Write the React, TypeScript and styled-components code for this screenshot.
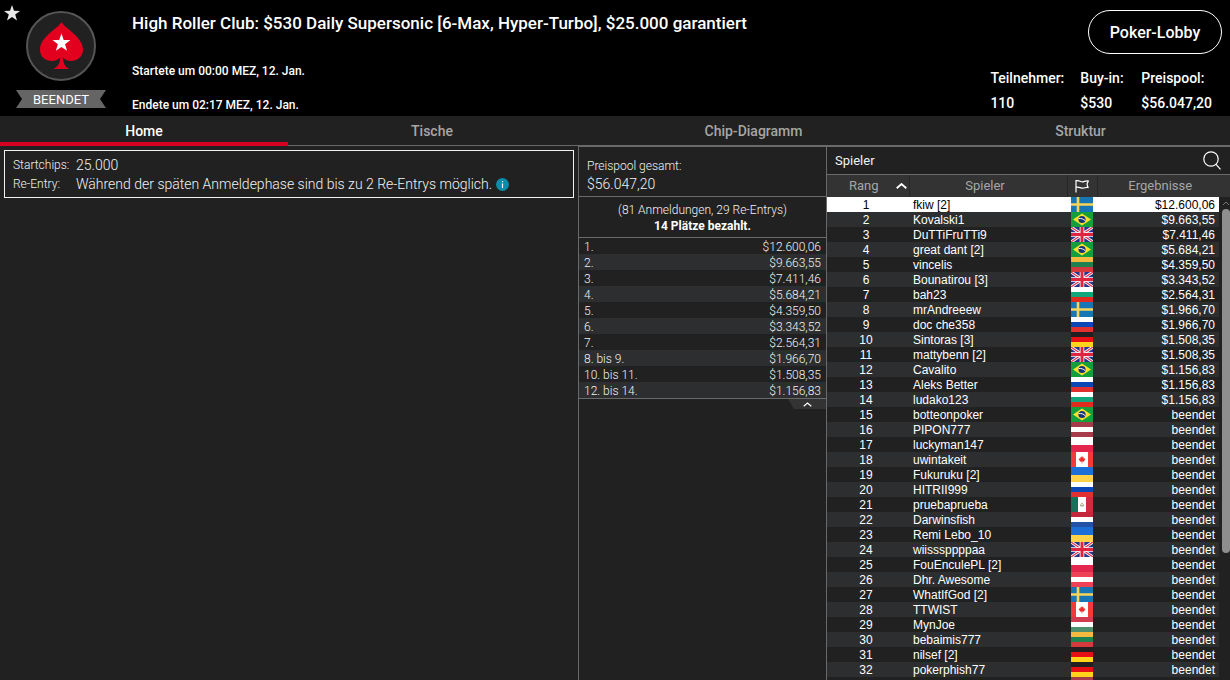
import React from "react";
import styled, { createGlobalStyle, css } from "styled-components";

const c = {
  bg: "#212121",
  stripe: "#2c2e2f",
  head: "#333333",
  line: "#6a6a6a",
  red: "#d70022",
  text: "#f2f2f2",
  muted: "#a6a6a6",
};

const GlobalStyle = createGlobalStyle`
  * { box-sizing: border-box; }
  body {
    margin: 0;
    background: ${c.bg};
    color: ${c.text};
    font-family: Roboto, "Liberation Sans", sans-serif;
  }
  button { font: inherit; color: inherit; background: none; border: 0; padding: 0; cursor: pointer; }
`;

const Window = styled.div`
  display: flex;
  flex-direction: column;
  height: 100vh;
  overflow: hidden;
`;

const Header = styled.header`
  display: flex;
  flex: none;
  background: #000;
  color: #fff;
  padding: 0 8px 0 4px;
  height: 116px;
`;

const FavoriteButton = styled.button`
  align-self: flex-start;
  display: block;
  width: 16px;
  height: 16px;
  margin-top: 5px;
  svg { display: block; }
`;

const Badge = styled.div`
  display: flex;
  flex-direction: column;
  align-items: center;
  width: 90px;
  margin-left: -4px;
  padding-top: 11px;
`;

const Emblem = styled.svg`
  display: block;
  width: 70px;
  height: 70px;
`;

const Ribbon = styled.div`
  width: 90px;
  margin-top: 9px;
  background: #656565;
  clip-path: polygon(0 0, 100% 0, calc(100% - 6px) 50%, 100% 100%, 0 100%, 6px 50%);
  font-size: 13px;
  line-height: 19px;
  height: 18px;
  text-align: center;
`;

const Summary = styled.div`
  flex: 1;
  margin-left: 26px;
  padding-top: 12px;
`;

const Title = styled.h1`
  margin: 0;
  font-size: 17px;
  font-weight: 500;
  line-height: 22px;
`;

const TimeLine = styled.p`
  margin: 0;
  font-size: 12px;
  font-weight: 500;
  line-height: 34px;
  &:first-of-type { margin-top: 20px; }
`;

const Side = styled.div`
  display: flex;
  flex-direction: column;
  align-items: flex-end;
  padding-top: 10px;
`;

const LobbyButton = styled.button`
  height: 44px;
  width: 134px;
  border: 1px solid #fff;
  border-radius: 22px;
  font-size: 16px;
  font-weight: 500;
`;

const Facts = styled.dl`
  display: flex;
  gap: 16px;
  margin: 12px 10px 0 0;
  font-size: 14px;
  font-weight: 500;
  line-height: 25px;
  div { min-width: 45px; }
  dd { margin: 0; }
`;

const Tabs = styled.nav`
  display: grid;
  flex: none;
  grid-template-columns: 288fr 288fr 355fr 299fr;
  height: 30px;
  border-bottom: 1px solid ${c.line};
`;

const Tab = styled.button<{ $active?: boolean }>`
  height: 30px;
  padding-top: 4px;
  font-size: 14px;
  font-weight: 500;
  line-height: 22px;
  color: ${(p) => (p.$active ? "#fff" : c.muted)};
  border-bottom: 4px solid ${(p) => (p.$active ? c.red : "transparent")};
`;

const Main = styled.main`
  flex: 1;
  min-height: 0;
  display: grid;
  grid-template-columns: 578fr 249fr 403fr;
`;

const InfoPanel = styled.section`
  padding: 4px;
`;

const InfoBox = styled.dl`
  display: grid;
  grid-template-columns: 63px 1fr;
  margin: 0;
  padding: 5px 8px 3px;
  border: 1px solid #f2f2f2;
  font-weight: 300;
  line-height: 19px;
  dt { font-size: 12px; }
  dd { margin: 0; font-size: 14px; }
`;

const InfoIcon = styled.svg`
  width: 13px;
  height: 13px;
  margin-left: 4px;
  vertical-align: -2px;
`;

const PrizePanel = styled.section`
  border: solid ${c.line};
  border-width: 1px 1px 0;
  font-weight: 300;
`;

const PrizeTotal = styled.div`
  padding: 10px 8px 3px;
  border-bottom: 1px solid ${c.line};
  line-height: 18px;
  font-size: 12px;
  strong { display: block; font-size: 14px; font-weight: 300; }
`;

const PrizeEntries = styled.div`
  padding: 5px 0 3px;
  border-bottom: 1px solid ${c.line};
  font-size: 12px;
  line-height: 16px;
  text-align: center;
  strong { display: block; font-weight: 700; color: #fff; }
`;

const PrizeTable = styled.table`
  width: 100%;
  border-collapse: collapse;
  border-bottom: 1px solid ${c.line};
  font-size: 12px;
  line-height: 14px;
  td { padding: 2px 5px 0; }
  td:last-child { text-align: right; }
  tr:nth-child(even) { background: ${c.stripe}; }
`;

const Collapse = styled.button`
  display: flex;
  justify-content: center;
  align-items: center;
  width: 38px;
  height: 10px;
  margin-left: auto;
  background: ${c.head};
  clip-path: polygon(0 0, 100% 0, 100% 100%, 6px 100%);
`;

const PlayerPanel = styled.section`
  min-width: 0;
  overflow: hidden;
  border-top: 1px solid ${c.line};
`;

const PlayerBar = styled.div`
  display: flex;
  align-items: center;
  justify-content: space-between;
  height: 28px;
  padding: 0 9px 0 8px;
  border-bottom: 1px solid ${c.line};
  h2 { margin: 0; font-size: 13px; font-weight: 400; }
  svg { display: block; }
`;

const TableArea = styled.div`
  position: relative;
`;

const PlayerTable = styled.table`
  width: 100%;
  table-layout: fixed;
  border-collapse: collapse;
  font: 12px/13px "Liberation Sans", Arial, sans-serif;
  color: #fff;
`;

const HeadCell = styled.th`
  height: 22px;
  padding: 0;
  background: ${c.head};
  border-right: 1px solid #272727;
  font: 400 13px/22px Roboto, "Liberation Sans", sans-serif;
  color: ${c.muted};
  &:nth-child(2) { padding-right: 6px; }
  &:nth-child(4) { padding-left: 4px; }
  &:nth-last-child(-n + 2) { border-right: 0; }
  svg { display: block; margin: 0 auto; }
`;

const SortHead = styled.span`
  display: flex;
  align-items: center;
  justify-content: space-between;
  padding: 0 2px 0 22px;
  && svg { margin: 0; }
`;

const selectedRow = css`
  td { background: #fff; color: #000; }
  td:last-child { background: ${c.bg}; }
`;

const PlayerRow = styled.tr<{ $selected: boolean }>`
  height: 15px;
  &:nth-child(even) td:not(:last-child) { background: ${c.stripe}; }
  td { padding: 2px 0 0; white-space: nowrap; }
  td:nth-child(1) { text-align: center; padding-right: 4px; }
  td:nth-child(2) { padding-left: 4px; }
  td:nth-child(3) { padding: 0 0 0 4px; }
  td:nth-child(4) { text-align: right; padding-right: 4px; }
  ${(p) => p.$selected && selectedRow}
`;

const FlagImage = styled.svg`
  display: block;
  width: 22px;
  height: 15px;
`;

const ScrollTrack = styled.div`
  position: absolute;
  top: 22px;
  right: 0;
  width: 8px;
  height: 356px;
  display: flex;
  flex-direction: column;
  align-items: center;
`;

const ScrollThumb = styled.div`
  width: 8px;
  flex: 1;
  background: #8e8e8e;
  border-radius: 4px;
`;

const Chevron = ({ width, height, color = "#fff", stroke = 1.5 }: { width: number; height: number; color?: string; stroke?: number }) => (
  <svg width={width} height={height} viewBox={`0 0 ${width} ${height}`} fill="none" stroke={color} strokeWidth={stroke}>
    <path d={`M0.7 ${height - 0.8}L${width / 2} 1L${width - 0.7} ${height - 0.8}`} />
  </svg>
);

const stripes: Record<string, [string, string, string]> = {
  lt: ["#f5b940", "#1f8050", "#d23a3c"],
  bg: ["#ffffff", "#11a67c", "#e02b1f"],
  ru: ["#ffffff", "#0b47b5", "#e23030"],
  de: ["#231f20", "#e60f14", "#ffd21c"],
  lv: ["#a63b49", "#ffffff", "#a63b49"],
  nl: ["#c4283b", "#ffffff", "#2152a5"],
  at: ["#ee4257", "#ffffff", "#ee4257"],
  hu: ["#d33c50", "#ffffff", "#4f8f6c"],
};

const leaf = "M11 4l.9 1.600.9-.400-.2 1.600 1.400-.6-.2 1 .7.5-1.700 1.300.1.700-1.600-.1V11.500h-.6V9.600l-1.600.1.100-.7L7.500 7.700l.7-.5-.2-1 1.400.6-.2-1.600.9.400z";

function Flag({ code }: { code: string }) {
  let art: React.ReactNode;
  if (stripes[code]) {
    art = stripes[code].map((fill, i) => <rect key={i} y={i * 5} width="22" height="5" fill={fill} />);
  } else if (code === "pl") {
    art = (<><rect width="22" height="8" fill="#fff" /><rect y="8" width="22" height="7" fill="#e2264d" /></>);
  } else if (code === "ua") {
    art = (<><rect width="22" height="8" fill="#1b6fd6" /><rect y="8" width="22" height="7" fill="#ffd24a" /></>);
  } else if (code === "se") {
    art = (<><rect width="22" height="15" fill="#1976b4" /><path d="M0 7.500h22M7 0v15" stroke="#f8d55a" strokeWidth="2.600" /></>);
  } else if (code === "br") {
    art = (
      <>
        <rect width="22" height="15" fill="#13a03c" />
        <path d="M2 7.500L11 1.500l9 6-9 6z" fill="#fbe12c" />
        <circle cx="11" cy="7.500" r="3.600" fill="#17347c" />
        <path d="M7.600 6.600c2.500-.4 5 .3 6.700 2.200" stroke="#fff" strokeWidth="1" fill="none" />
      </>
    );
  } else if (code === "gb") {
    art = (
      <>
        <rect width="22" height="15" fill="#27348b" />
        <path d="M0 0l22 15M22 0L0 15" stroke="#fff" strokeWidth="3" />
        <path d="M0 0l22 15M22 0L0 15" stroke="#e0344e" strokeWidth="1.200" />
        <path d="M11 0v15M0 7.500h22" stroke="#fff" strokeWidth="4.600" />
        <path d="M11 0v15M0 7.500h22" stroke="#df2440" strokeWidth="3" />
      </>
    );
  } else if (code === "ca") {
    art = (<><rect width="22" height="15" fill="#f23a3c" /><rect x="5" width="12" height="15" fill="#fff" /><path d={leaf} fill="#ee2a2a" /></>);
  } else {
    art = (
      <>
        <rect width="22" height="15" fill="#fff" />
        <rect width="7" height="15" fill="#17705a" />
        <rect x="15" width="7" height="15" fill="#d32a40" />
        <path d="M8.700 8.500c1 1.500 3.600 1.500 4.600 0L11 5.500z" fill="#a9a488" />
        <circle cx="11" cy="7.800" r=".8" fill="#fff" />
      </>
    );
  }
  return <FlagImage viewBox="0 0 22 15" preserveAspectRatio="none" aria-hidden="true">{art}</FlagImage>;
}

const prizes = [
  ["1.", "$12.600,06"], ["2.", "$9.663,55"], ["3.", "$7.411,46"], ["4.", "$5.684,21"], ["5.", "$4.359,50"],
  ["6.", "$3.343,52"], ["7.", "$2.564,31"], ["8. bis 9.", "$1.966,70"], ["10. bis 11.", "$1.508,35"], ["12. bis 14.", "$1.156,83"],
];

const players = [
  ["fkiw [2]", "se", "$12.600,06"], ["Kovalski1", "br", "$9.663,55"], ["DuTTiFruTTi9", "gb", "$7.411,46"],
  ["great dant [2]", "br", "$5.684,21"], ["vincelis", "lt", "$4.359,50"], ["Bounatirou [3]", "gb", "$3.343,52"],
  ["bah23", "bg", "$2.564,31"], ["mrAndreeew", "se", "$1.966,70"], ["doc che358", "ru", "$1.966,70"],
  ["Sintoras [3]", "de", "$1.508,35"], ["mattybenn [2]", "gb", "$1.508,35"], ["Cavalito", "br", "$1.156,83"],
  ["Aleks Better", "ru", "$1.156,83"], ["ludako123", "bg", "$1.156,83"], ["botteonpoker", "br"], ["PIPON777", "lv"],
  ["luckyman147", "pl"], ["uwintakeit", "ca"], ["Fukuruku [2]", "ua"], ["HITRII999", "ru"], ["pruebaprueba", "mx"],
  ["Darwinsfish", "nl"], ["Remi Lebo_10", "ua"], ["wiisssppppaa", "gb"], ["FouEnculePL [2]", "pl"], ["Dhr. Awesome", "at"],
  ["WhatIfGod [2]", "se"], ["TTWIST", "ca"], ["MynJoe", "hu"], ["bebaimis777", "lt"], ["nilsef [2]", "de"],
  ["pokerphish77", "de"], ["", "lv"],
];

const starPath = "M8 0l2 5.800 6 .1-4.800 3.700 1.800 5.900L8 12l-5 3.500 1.800-5.900L0 5.900l6-.1z";

export default function App() {
  return (
    <Window>
      <GlobalStyle />
      <Header>
        <FavoriteButton aria-label="Favorit">
          <svg width="16" height="16" viewBox="0 0 16 16"><path d={starPath} fill="#e8e8e8" /></svg>
        </FavoriteButton>
        <Badge>
          <Emblem viewBox="0 0 70 70" aria-hidden="true">
            <circle cx="35" cy="35" r="34" fill="#212121" stroke="#555" strokeWidth="2" />
            <path
              d="M35.500 11C39 17.500 57 26 57 38.500C57 46 51 50 45 50C41.500 50 38.500 48.500 36.800 46C37 52 39 56 43.500 58H27C32 56 34 52 34.200 46C32.500 48.500 29.500 50 26 50C19.500 50 14 46 14 38.500C14 26 32 17.500 35.500 11z"
              fill="#e3001f"
            />
            <path d={starPath} transform="translate(26.500 22.500) scale(1.120)" fill="#fff" />
          </Emblem>
          <Ribbon>BEENDET</Ribbon>
        </Badge>
        <Summary>
          <Title>High Roller Club: $530 Daily Supersonic [6-Max, Hyper-Turbo], $25.000 garantiert</Title>
          <TimeLine>Startete um 00:00 MEZ, 12. Jan.</TimeLine>
          <TimeLine>Endete um 02:17 MEZ, 12. Jan.</TimeLine>
        </Summary>
        <Side>
          <LobbyButton>Poker-Lobby</LobbyButton>
          <Facts>
            <div><dt>Teilnehmer:</dt><dd>110</dd></div>
            <div><dt>Buy-in:</dt><dd>$530</dd></div>
            <div><dt>Preispool:</dt><dd>$56.047,20</dd></div>
          </Facts>
        </Side>
      </Header>
      <Tabs>
        <Tab $active>Home</Tab>
        <Tab>Tische</Tab>
        <Tab>Chip-Diagramm</Tab>
        <Tab>Struktur</Tab>
      </Tabs>
      <Main>
        <InfoPanel>
          <InfoBox>
            <dt>Startchips:</dt>
            <dd>25.000</dd>
            <dt>Re-Entry:</dt>
            <dd>
              Während der späten Anmeldephase sind bis zu 2 Re-Entrys möglich.
              <InfoIcon viewBox="0 0 13 13" aria-hidden="true">
                <circle cx="6.500" cy="6.500" r="6.500" fill="#0a8cab" />
                <path d="M6.500 5.500v4.500M6.500 3v1.300" stroke="#fff" strokeWidth="1.200" />
              </InfoIcon>
            </dd>
          </InfoBox>
        </InfoPanel>
        <PrizePanel>
          <PrizeTotal>Preispool gesamt:<strong>$56.047,20</strong></PrizeTotal>
          <PrizeEntries>(81 Anmeldungen, 29 Re-Entrys)<strong>14 Plätze bezahlt.</strong></PrizeEntries>
          <PrizeTable>
            <tbody>
              {prizes.map(([place, amount]) => (
                <tr key={place}><td>{place}</td><td>{amount}</td></tr>
              ))}
            </tbody>
          </PrizeTable>
          <Collapse aria-label="Einklappen"><Chevron width={9} height={5} stroke={1.2} /></Collapse>
        </PrizePanel>
        <PlayerPanel>
          <PlayerBar>
            <h2>Spieler</h2>
            <button aria-label="Suchen">
              <svg width="18" height="19" viewBox="0 0 18 19" fill="none" stroke="#fff" strokeWidth="1.200">
                <circle cx="8" cy="8" r="7.200" />
                <path d="M13 13.300L17.500 18.300" />
              </svg>
            </button>
          </PlayerBar>
          <TableArea>
            <PlayerTable>
              <colgroup>
                <col style={{ width: "82px" }} />
                <col />
                <col style={{ width: "30px" }} />
                <col style={{ width: "122px" }} />
                <col style={{ width: "11px" }} />
              </colgroup>
              <thead>
                <tr>
                  <HeadCell><SortHead>Rang<Chevron width={11} height={6} stroke={1.8} /></SortHead></HeadCell>
                  <HeadCell>Spieler</HeadCell>
                  <HeadCell aria-label="Land">
                    <svg width="14" height="14" viewBox="0 0 14 14" fill="none" stroke="#fff" strokeWidth="1.200">
                      <path d="M1 1v12.500M1 1.800C4.500.8 5.500 3.300 8 2.800C10 2.400 11 1.600 13.300 2L12 5L13 8.500C11 8 10 9 8 9.200C5.500 9.400 4 7.400 1 8.400" />
                    </svg>
                  </HeadCell>
                  <HeadCell>Ergebnisse</HeadCell>
                  <HeadCell />
                </tr>
              </thead>
              <tbody>
                {players.map(([name, flag, result = "beendet"], i) => (
                  <PlayerRow key={i} $selected={i === 0}>
                    <td>{name && i + 1}</td>
                    <td>{name}</td>
                    <td><Flag code={flag} /></td>
                    <td>{name && result}</td>
                    <td />
                  </PlayerRow>
                ))}
              </tbody>
            </PlayerTable>
            <ScrollTrack>
              <svg width="8" height="12" viewBox="0 0 8 12" fill="none" stroke="#777"><path d="M1 8l3-3 3 3" /></svg>
              <ScrollThumb />
            </ScrollTrack>
          </TableArea>
        </PlayerPanel>
      </Main>
    </Window>
  );
}
